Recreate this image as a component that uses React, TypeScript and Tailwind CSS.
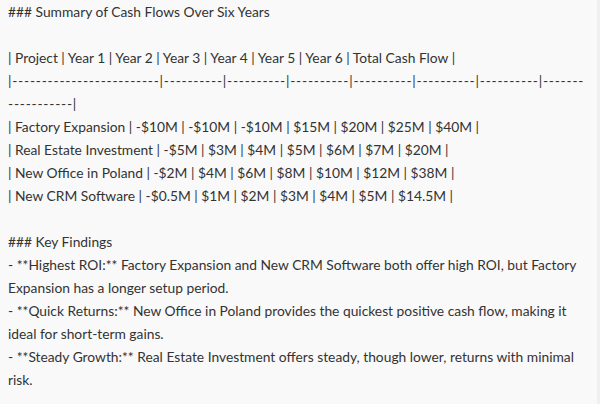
const sep1 =
  "|" +
  "-".repeat(25) +
  "|" +
  Array.from({ length: 6 }, () => "-".repeat(10) + "|").join("") +
  "-".repeat(7);
const sep2 = "-".repeat(11) + "|";

const lines: string[] = [
  "### Summary of Cash Flows Over Six Years",
  "",
  "| Project | Year 1 | Year 2 | Year 3 | Year 4 | Year 5 | Year 6 | Total Cash Flow |",
  sep1,
  sep2,
  "| Factory Expansion | -$10M | -$10M | -$10M | $15M | $20M | $25M | $40M |",
  "| Real Estate Investment | -$5M | $3M | $4M | $5M | $6M | $7M | $20M |",
  "| New Office in Poland | -$2M | $4M | $6M | $8M | $10M | $12M | $38M |",
  "| New CRM Software | -$0.5M | $1M | $2M | $3M | $4M | $5M | $14.5M |",
  "",
  "### Key Findings",
  "- **Highest ROI:** Factory Expansion and New CRM Software both offer high ROI, but Factory",
  "Expansion has a longer setup period.",
  "- **Quick Returns:** New Office in Poland provides the quickest positive cash flow, making it",
  "ideal for short-term gains.",
  "- **Steady Growth:** Real Estate Investment offers steady, though lower, returns with minimal",
  "risk.",
];

export default function App() {
  return (
    <div className="flex h-[404px] w-[600px] overflow-hidden bg-[#f9f9f9]">
      <div className="flex-1 pl-2 font-['Lato',sans-serif] text-[13.8px] leading-[23px] text-[#333333]">
        {lines.map((line, i) => (
          <div
            key={i}
            className={
              line.startsWith("|-") || line.startsWith("---")
                ? "h-[23px] whitespace-pre tracking-[0.77px]"
                : "h-[23px] whitespace-pre"
            }
          >
            {line}
          </div>
        ))}
      </div>
      <div className="w-[3px] bg-[#f0f0f0]" />
    </div>
  );
}
